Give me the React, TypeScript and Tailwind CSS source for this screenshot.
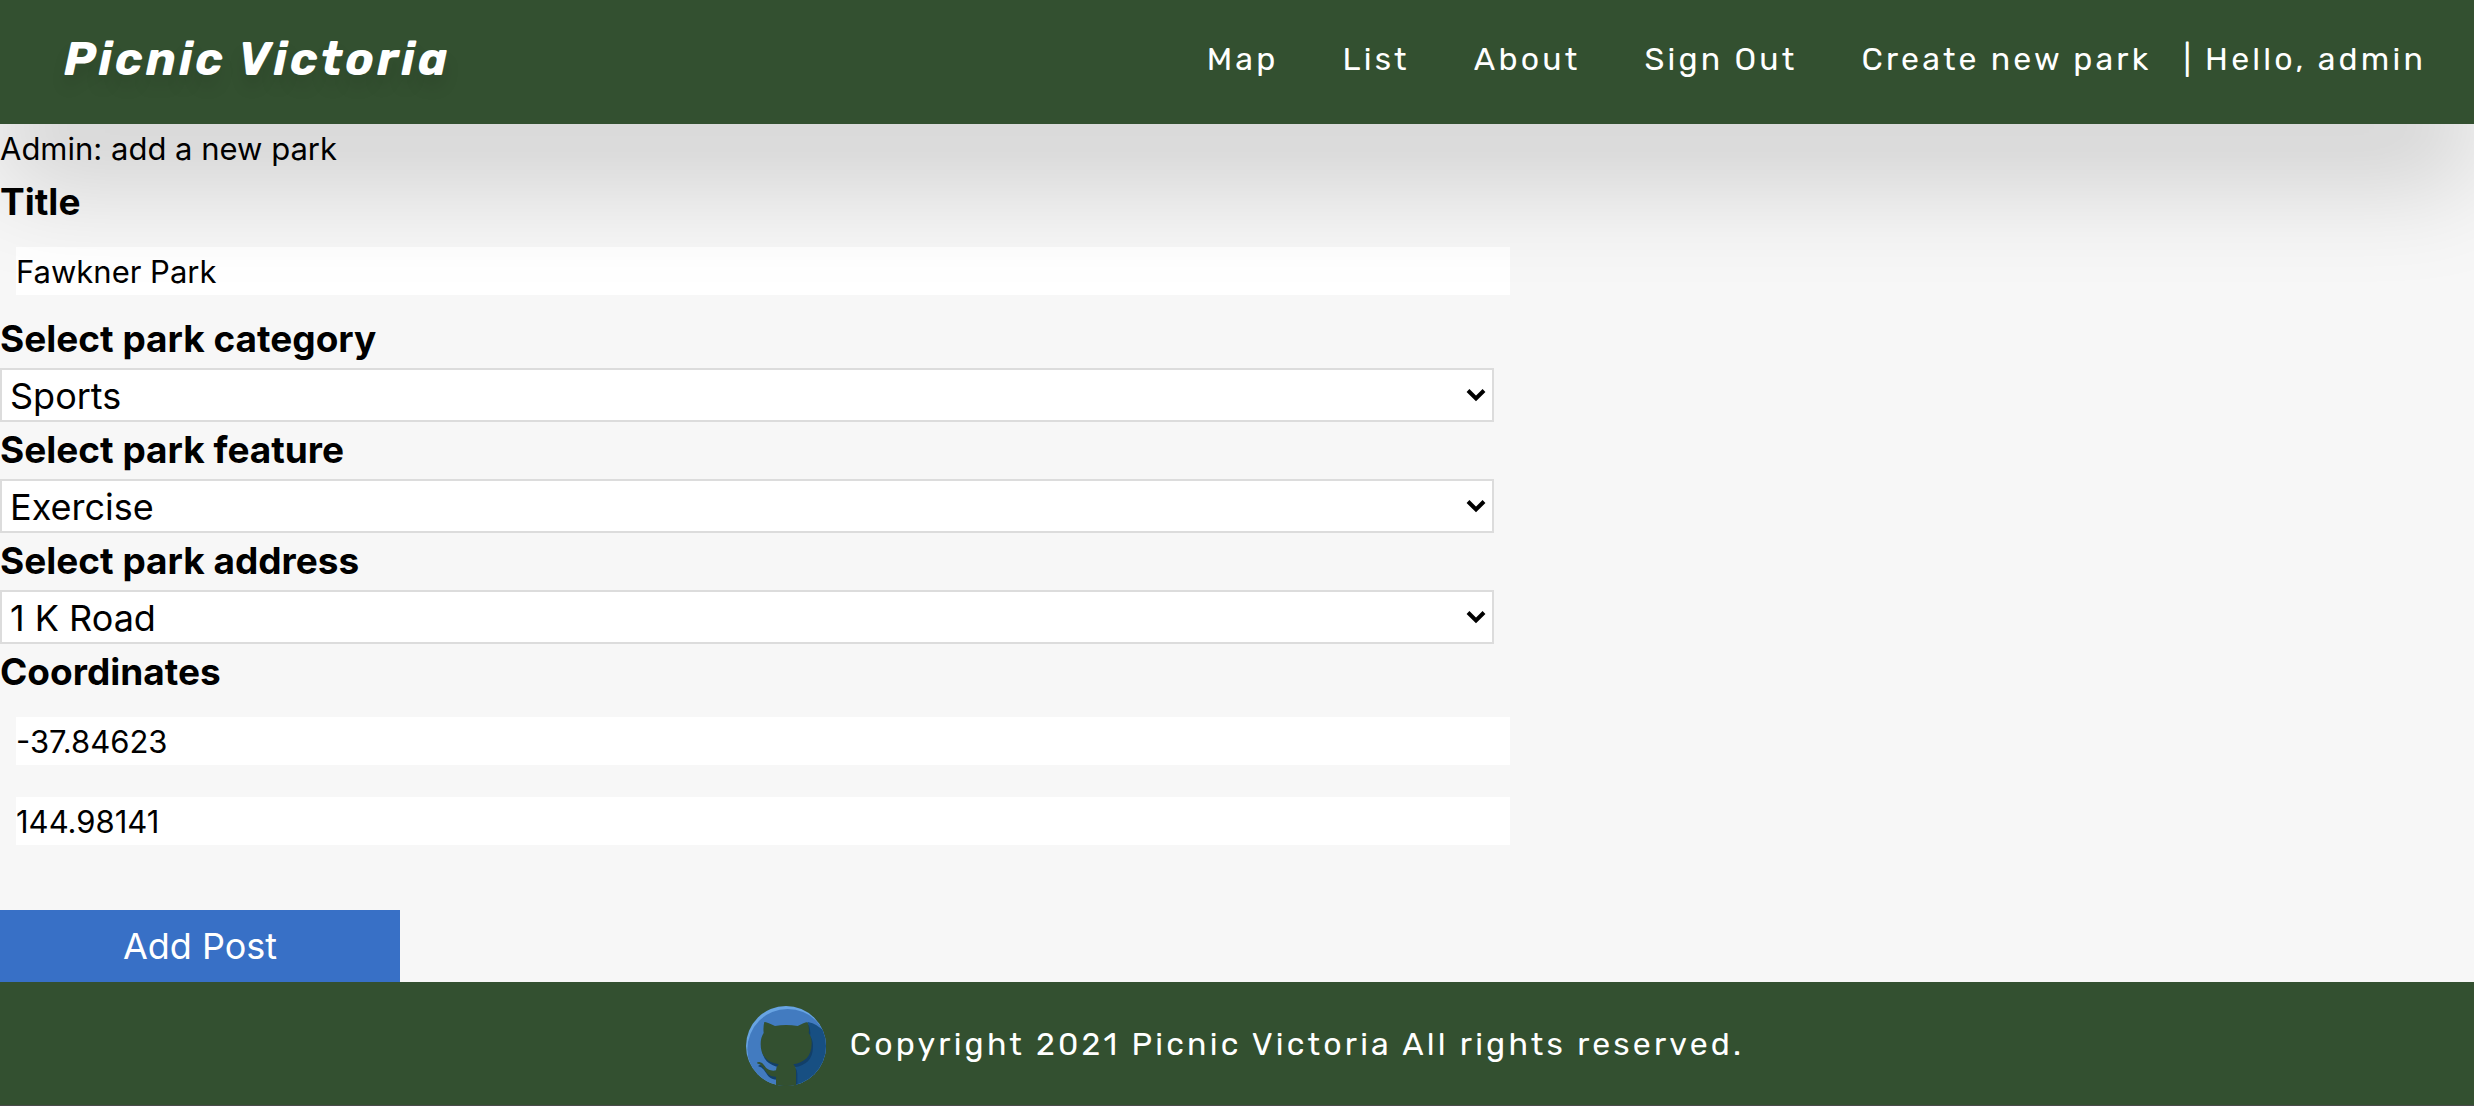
import type { ReactNode } from "react";

const navLinks = ["Map", "List", "About", "Sign Out", "Create new park"];

const labelClass = "flex h-[57px] items-center pb-0.5 text-[37px] font-bold";
const fieldWidth = "w-[calc(60%+10px)]";
const inputClass = "my-4 ml-4 block h-12 bg-white p-0 text-[31px] text-black outline-none";

const catPath =
  "M103 98Q106 96 135 110Q168 104 203 110Q228 96 233 99Q239 118 236 131Q246 144 245 164C244 202 224 219 190 225Q198 232 198 244V292H138V262C112 262 108 246 98 233Q91 224 81 222Q80 218 88 218C104 220 104 240 122 243Q130 245 138 243Q138 232 146 225C112 219 92 202 92 164Q92 144 101 131Q99 112 103 98Z";

function Header() {
  return (
    <header className="relative z-10 flex h-[124px] shrink-0 items-center justify-between bg-[#335030] pr-12 pb-1.5 pl-16 font-['Rubik','Roboto',sans-serif] text-white shadow-[0_64px_100px_rgba(0,0,0,0.15)]">
      <a
        href="#home"
        className="text-[47px] font-bold tracking-[3px] italic [text-shadow:0_12px_16px_rgba(0,0,0,0.1)]"
      >
        Picnic Victoria
      </a>
      <nav className="flex items-center text-[32px] tracking-widest whitespace-nowrap">
        <ul className="flex items-center gap-16">
          {navLinks.map((label) => (
            <li key={label}>
              <a href="#nav">{label}</a>
            </li>
          ))}
        </ul>
        <span className="ml-8">| Hello, admin</span>
      </nav>
    </header>
  );
}

function SelectField({ id, label, children }: { id: string; label: string; children: ReactNode }) {
  return (
    <div>
      <label htmlFor={id} className={labelClass}>
        {label}
      </label>
      <div className={`relative ${fieldWidth}`}>
        <select
          id={id}
          className="block h-[54px] w-full appearance-none border-2 border-[#dcdcdc] bg-white pt-0.5 pl-2 text-4xl text-black"
        >
          {children}
        </select>
        <svg
          aria-hidden="true"
          viewBox="0 0 20 14"
          className="pointer-events-none absolute top-5 right-2 h-3.5 w-5"
        >
          <path d="M2 2.500 10 10.500 18 2.500" fill="none" stroke="#000" strokeWidth="4" />
        </svg>
      </div>
    </div>
  );
}

function GithubBadge() {
  return (
    <svg aria-hidden="true" viewBox="48 50 240 240" className="size-20">
      <defs>
        <clipPath id="badge-disc">
          <circle cx="168" cy="170" r="120" />
        </clipPath>
      </defs>
      <g clipPath="url(#badge-disc)">
        <rect x="48" y="50" width="240" height="240" fill="#68a4e3" />
        <circle cx="173" cy="180" r="121" fill="#427bc0" />
        <path d="M234 98Q262 102 290 134V292H196V234L184 222L236 190Z" fill="#174f82" />
        <path d={catPath} transform="translate(4 9)" fill="#123f68" />
        <path d={catPath} fill="#335030" />
        <rect x="138" y="278" width="60" height="14" fill="#335030" />
      </g>
    </svg>
  );
}

function Footer() {
  return (
    <footer className="flex h-[124px] shrink-0 items-center justify-center gap-6 border-b border-[#4a4a4a] bg-[#335030] pt-1 pl-4 font-['Rubik','Roboto',sans-serif] text-white">
      <a href="#github" aria-label="GitHub">
        <GithubBadge />
      </a>
      <p className="pb-1 text-[32px] tracking-widest">Copyright 2021 Picnic Victoria All rights reserved.</p>
    </footer>
  );
}

export default function App() {
  return (
    <div className="flex min-h-screen flex-col bg-[#f7f7f7] font-['Inter',sans-serif] text-black">
      <Header />
      <main className="flex flex-1 flex-col">
        <p className="flex h-[50px] items-center text-[31px]">Admin: add a new park</p>
        <form className="flex flex-1 flex-col" onSubmit={(event) => event.preventDefault()}>
          <label htmlFor="title" className={labelClass}>
            Title
          </label>
          <input id="title" type="text" defaultValue="Fawkner Park" className={`${inputClass} ${fieldWidth}`} />
          <SelectField id="category" label="Select park category">
            <option>Sports</option>
          </SelectField>
          <SelectField id="feature" label="Select park feature">
            <option>Exercise</option>
          </SelectField>
          <SelectField id="address" label="Select park address">
            <option>1 K Road</option>
          </SelectField>
          <label htmlFor="latitude" className={labelClass}>
            Coordinates
          </label>
          <input id="latitude" type="text" defaultValue="-37.84623" className={`${inputClass} ${fieldWidth}`} />
          <input
            type="text"
            aria-label="Longitude"
            defaultValue="144.98141"
            className={`${inputClass} ${fieldWidth}`}
          />
          <button type="submit" className="mt-auto h-[72px] w-[400px] bg-[#3870c6] text-4xl text-white">
            Add Post
          </button>
        </form>
      </main>
      <Footer />
    </div>
  );
}
